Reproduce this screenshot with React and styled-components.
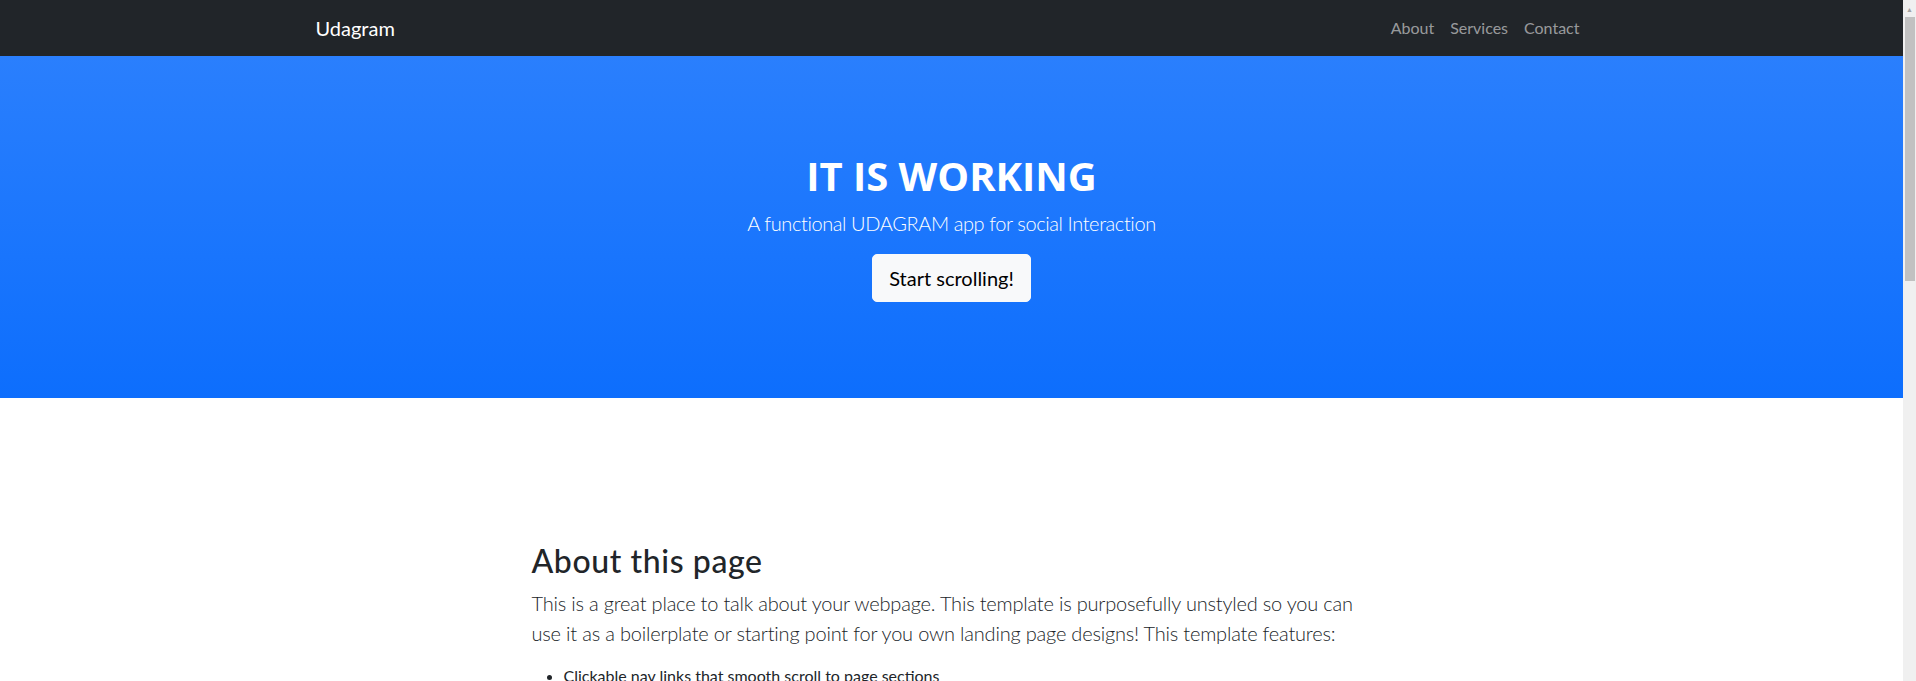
import React from 'react';
import styled, { createGlobalStyle } from 'styled-components';

const GlobalStyle = createGlobalStyle`
  html, body {
    margin: 0;
    padding: 0;
    overflow: hidden;
  }
  body {
    font-family: Lato, "Open Sans", sans-serif;
    color: #212529;
    background: #fff;
  }
  * {
    box-sizing: border-box;
  }
`;

const Shell = styled.div`
  display: flex;
  height: 100vh;
`;

const Page = styled.div`
  flex: 1;
  min-width: 0;
  overflow: hidden;
`;

const Container = styled.div`
  max-width: 1320px;
  margin: 0 auto;
  padding: 0 24px;
`;

const Navbar = styled.nav`
  background-color: #212529;
  height: 56px;
`;

const NavContent = styled(Container)`
  height: 100%;
  display: flex;
  justify-content: space-between;
  align-items: center;
`;

const Brand = styled.a`
  font-size: 20px;
  line-height: 1.5;
  color: #fff;
  text-decoration: none;
`;

const NavList = styled.ul`
  display: flex;
  list-style: none;
  margin: 0;
  padding: 0;
`;

const NavLink = styled.a`
  display: block;
  padding: 8px;
  font-size: 16px;
  line-height: 1.5;
  color: rgba(255, 255, 255, 0.55);
  text-decoration: none;
`;

const Hero = styled.header`
  background: linear-gradient(180deg, #2a7ffd 0%, #0d6efd 100%);
  color: #fff;
  padding: 96px 0 96px;
  text-align: center;
`;

const HeroTitle = styled.h1`
  font-family: "Open Sans", Lato, sans-serif;
  font-size: 40px;
  font-weight: 700;
  line-height: 1.2;
  margin: 0 0 8px;
`;

const Lead = styled.p`
  font-size: 20px;
  font-weight: 300;
  line-height: 1.5;
  letter-spacing: ${({ $tracking }) => $tracking || '-0.4px'};
  margin: 0 0 16px;
`;

const LightButton = styled.a`
  display: inline-block;
  font-size: 20px;
  line-height: 1.5;
  padding: 8px 16px;
  border: 1px solid #f8f9fa;
  border-radius: 5px;
  background: #f8f9fa;
  color: #000;
  text-decoration: none;
`;

const Section = styled.section`
  padding: 144px 0 160px;
`;

const Column = styled.div`
  max-width: 840px;
  margin: 0 auto;
`;

const SectionTitle = styled.h2`
  font-size: 32px;
  font-weight: 500;
  line-height: 1.2;
  letter-spacing: 0.6px;
  margin: 0 0 8px;
`;

const FeatureList = styled.ul`
  margin: 0 0 16px;
  padding-left: 32px;
  font-size: 16px;
  line-height: 1.5;
`;

const ScrollBar = styled.div`
  width: 13px;
  flex-shrink: 0;
  background: #f0f0f0;
  display: flex;
  flex-direction: column;
`;

const ScrollArrow = styled.div`
  height: 17px;
  display: flex;
  align-items: center;
  justify-content: center;
  color: #a3a3a3;
  font-size: 7px;
`;

const ScrollThumb = styled.div`
  height: 264px;
  margin: 0 1px 0 2px;
  background: #c1c1c1;
`;

const features = [
  'Clickable nav links that smooth scroll to page sections',
  'Responsive behavior when clicking nav links perfect for a one page website',
  "Bootstrap's scrollspy feature which highlights which section of the page you're on in the navbar",
  'Minimal custom CSS so you are free to explore your own unique design options',
];

export default function App() {
  return (
    <>
      <GlobalStyle />
      <Shell>
        <Page>
          <Navbar>
            <NavContent>
              <Brand href="#page-top">Udagram</Brand>
              <NavList>
                <li><NavLink href="#about">About</NavLink></li>
                <li><NavLink href="#services">Services</NavLink></li>
                <li><NavLink href="#contact">Contact</NavLink></li>
              </NavList>
            </NavContent>
          </Navbar>
          <Hero>
            <Container>
              <HeroTitle>IT IS WORKING</HeroTitle>
              <Lead>A functional UDAGRAM app for social Interaction</Lead>
              <LightButton href="#about">Start scrolling!</LightButton>
            </Container>
          </Hero>
          <Section id="about">
            <Container>
              <Column>
                <SectionTitle>About this page</SectionTitle>
                <Lead $tracking="-0.2px">
                  This is a great place to talk about your webpage. This template is purposefully
                  unstyled so you can use it as a boilerplate or starting point for you own landing
                  page designs! This template features:
                </Lead>
                <FeatureList>
                  {features.map((f) => (
                    <li key={f}>{f}</li>
                  ))}
                </FeatureList>
              </Column>
            </Container>
          </Section>
        </Page>
        <ScrollBar>
          <ScrollArrow>▲</ScrollArrow>
          <ScrollThumb />
        </ScrollBar>
      </Shell>
    </>
  );
}
